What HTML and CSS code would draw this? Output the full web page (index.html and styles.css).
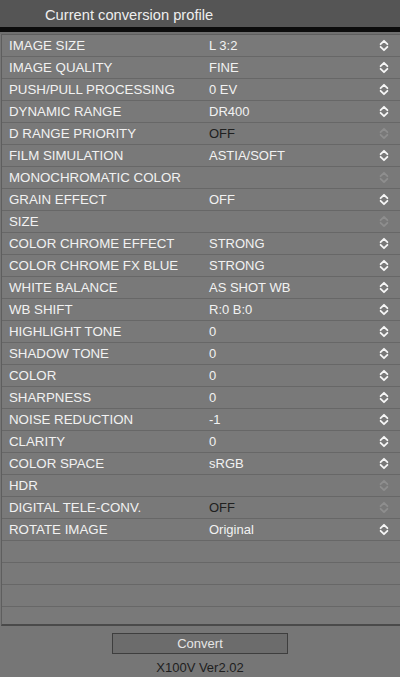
FILE: index.html
```html
<!DOCTYPE html>
<html>
<head>
<meta charset="utf-8">
<link rel="stylesheet" href="styles.css">
</head>
<body>
<div class="app">
  <div class="header">Current conversion profile</div>
  <div class="blackbar"></div>
  <div class="gap"></div>
  <div class="table" id="table"></div>
  <div class="footer">
    <div class="btn">Convert</div>
    <div class="version">X100V Ver2.02</div>
  </div>
</div>
<script src="app.js"></script>
</body>
</html>
```
FILE: styles.css
```css
html, body {
  margin: 0;
  padding: 0;
}
body {
  width: 400px;
  height: 677px;
  overflow: hidden;
  background: #767676;
  font-family: "Liberation Sans", Arial, sans-serif;
}
.app {
  display: flex;
  flex-direction: column;
  height: 677px;
}
.header {
  height: 27px;
  box-sizing: border-box;
  padding-left: 45px;
  padding-top: 6px;
  background: #555555;
  color: #eeeeee;
  font-size: 14.7px;
  line-height: 18px;
}
.blackbar {
  height: 5px;
  background: #0c0c0c;
}
.gap {
  height: 2px;
  background: #6f6f6f;
}
.table {
  height: 592px;
  box-sizing: border-box;
  margin-left: 1px;
  border-top: 1px solid #5e5e5e;
  border-left: 1px solid #5e5e5e;
  border-bottom: 2px solid #4a4a4a;
  background: #797979;
  overflow: hidden;
}
.row {
  display: grid;
  grid-template-columns: 200px 1fr 20px;
  align-items: center;
  height: 21px;
  border-bottom: 1px solid #676767;
  padding-left: 7px;
  padding-right: 6px;
  color: #f2f2f2;
}
.label {
  white-space: nowrap;
  font-size: 13.3px;
}
.value {
  white-space: nowrap;
  font-size: 13px;
}
.value.off {
  color: #202020;
}
.chev {
  display: flex;
  justify-content: center;
}
.chev svg {
  display: block;
}
.chev .on {
  stroke: #f6f6f6;
}
.chev .dis {
  stroke: #8e8e8e;
}
.footer {
  flex: 1;
  display: flex;
  flex-direction: column;
  align-items: center;
  padding-top: 7px;
}
.btn {
  width: 176px;
  height: 21px;
  box-sizing: border-box;
  border: 1px solid #3e3e3e;
  background: #6c6c6c;
  color: #e6e6e6;
  font-size: 13px;
  line-height: 19px;
  text-align: center;
}
.version {
  margin-top: 5px;
  font-size: 13px;
  line-height: 18px;
  color: #1e1e1e;
}
```
FILE: app.js
```js
var rows = [
  ["IMAGE SIZE", "L 3:2", 1],
  ["IMAGE QUALITY", "FINE", 1],
  ["PUSH/PULL PROCESSING", "0 EV", 1],
  ["DYNAMIC RANGE", "DR400", 1],
  ["D RANGE PRIORITY", "OFF", 0],
  ["FILM SIMULATION", "ASTIA/SOFT", 1],
  ["MONOCHROMATIC COLOR", "", 0],
  ["GRAIN EFFECT", "OFF", 1],
  ["SIZE", "", 0],
  ["COLOR CHROME EFFECT", "STRONG", 1],
  ["COLOR CHROME FX BLUE", "STRONG", 1],
  ["WHITE BALANCE", "AS SHOT WB", 1],
  ["WB SHIFT", "R:0 B:0", 1],
  ["HIGHLIGHT TONE", "0", 1],
  ["SHADOW TONE", "0", 1],
  ["COLOR", "0", 1],
  ["SHARPNESS", "0", 1],
  ["NOISE REDUCTION", "-1", 1],
  ["CLARITY", "0", 1],
  ["COLOR SPACE", "sRGB", 1],
  ["HDR", "", 0],
  ["DIGITAL TELE-CONV.", "OFF", 0],
  ["ROTATE IMAGE", "Original", 1]
];
var t = document.getElementById("table");
var html = "";
rows.forEach(function (r) {
  var cls = r[2] ? "on" : "dis";
  html += '<div class="row"><span class="label">' + r[0] + '</span>' +
    '<span class="value' + (r[2] ? '' : ' off') + '">' + r[1] + '</span>' +
    '<span class="chev"><svg width="10" height="13" viewBox="0 0 10 13"><path class="' + cls + '" d="M1.6 5.2 L5 1.8 L8.4 5.2 M1.6 7.8 L5 11.2 L8.4 7.8" fill="none" stroke-width="1.8" stroke-linecap="round" stroke-linejoin="round"/></svg></span></div>';
});
for (var i = 0; i < 5; i++) {
  html += '<div class="row"></div>';
}
t.innerHTML = html;
```
